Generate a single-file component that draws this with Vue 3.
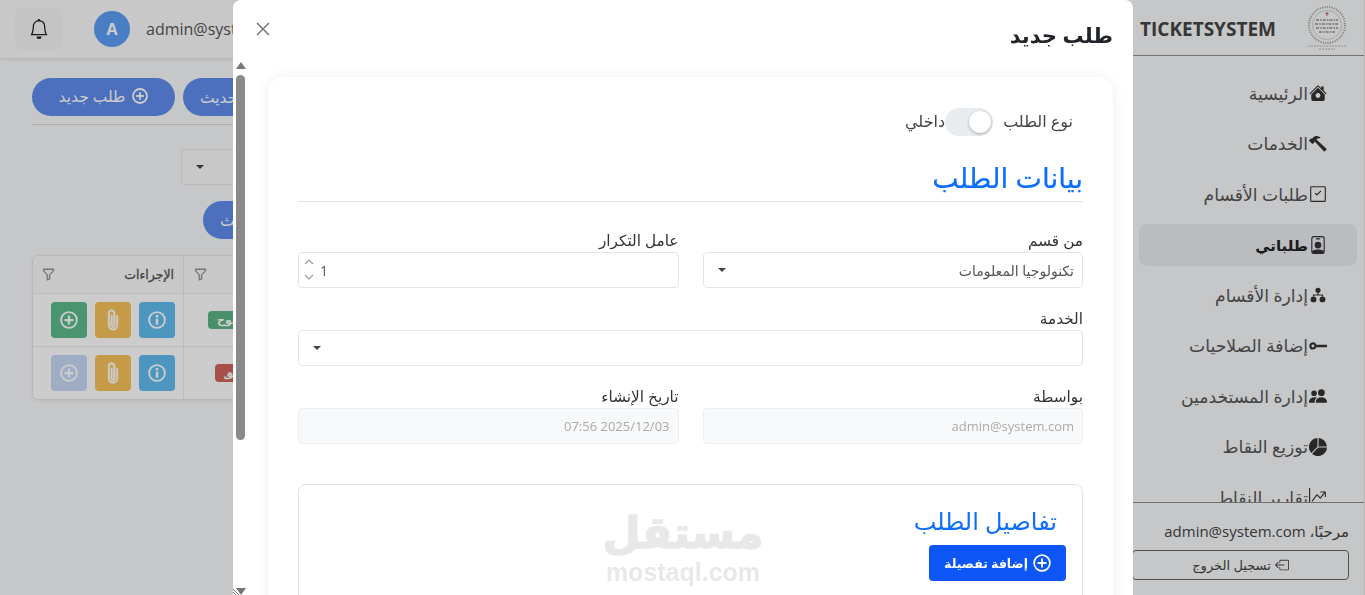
<script setup>
const clip = 'M4.5 3a2.5 2.5 0 0 1 5 0v9a1.5 1.5 0 0 1-3 0V5a.5.5 0 0 1 1 0v7a.5.5 0 0 0 1 0V3a1.5 1.5 0 1 0-3 0v9a2.5 2.5 0 0 0 5 0V5a.5.5 0 0 1 1 0v7a3.5 3.5 0 1 1-7 0z'
const funnel = 'M1.5 1.5A.5.5 0 0 1 2 1h12a.5.5 0 0 1 .5.5v2a.5.5 0 0 1-.128.334L10 8.692V13.5a.5.5 0 0 1-.342.474l-3 1A.5.5 0 0 1 6 14.5V8.692L1.628 3.834A.5.5 0 0 1 1.5 3.5zm1 .5v1.308l4.372 4.858A.5.5 0 0 1 7 8.5v5.306l2-.666V8.5a.5.5 0 0 1 .128-.334L13.5 3.308V2z'
const bell = 'M8 16a2 2 0 0 0 2-2H6a2 2 0 0 0 2 2M8 1.918l-.797.161A4 4 0 0 0 4 6c0 .628-.134 2.197-.459 3.742-.16.767-.376 1.566-.663 2.258h10.244c-.287-.692-.502-1.49-.663-2.258C12.134 8.197 12 6.628 12 6a4 4 0 0 0-3.203-3.92zM14.22 12c.223.447.481.801.78 1H1c.299-.199.557-.553.78-1C2.68 10.2 3 6.88 3 6c0-2.42 1.72-4.44 4.005-4.901a1 1 0 1 1 1.99 0A5 5 0 0 1 13 6c0 .88.32 4.2 1.22 6'
const logout = 'M6 12.5a.5.5 0 0 0 .5.5h8a.5.5 0 0 0 .5-.5v-9a.5.5 0 0 0-.5-.5h-8a.5.5 0 0 0-.5.5v2a.5.5 0 0 1-1 0v-2A1.5 1.5 0 0 1 6.5 2h8A1.5 1.5 0 0 1 16 3.5v9a1.5 1.5 0 0 1-1.5 1.5h-8A1.5 1.5 0 0 1 5 12.5v-2a.5.5 0 0 1 1 0zM.146 8.354a.5.5 0 0 1 0-.708l3-3a.5.5 0 1 1 .708.708L1.707 7.5H10.5a.5.5 0 0 1 0 1H1.707l2.147 2.146a.5.5 0 0 1-.708.708z'

const navItems = [
  { label: 'الرئيسية', d: 'M7.293 1.5a1 1 0 0 1 1.414 0L11 3.793V2.5a.5.5 0 0 1 .5-.5h1a.5.5 0 0 1 .5.5v3.293l2.354 2.353a.5.5 0 0 1-.708.708L8 2.207 1.354 8.854a.5.5 0 1 1-.708-.708zM14 9.293l-6-6-6 6V13.5A1.5 1.5 0 0 0 3.5 15h9a1.5 1.5 0 0 0 1.5-1.5zM8 8a2.2 2.2 0 1 0 0 4.400a2.2 2.2 0 0 0 0-4.400' },
  { label: 'الخدمات', d: 'M9.972 2.508a.5.5 0 0 0-.16-.556l-.178-.129a5 5 0 0 0-2.076-.783C6.215.862 4.504 1.229 2.84 3.133H1.786a.5.5 0 0 0-.354.147L.146 4.567a.5.5 0 0 0 0 .706l2.571 2.579a.5.5 0 0 0 .708 0l1.286-1.29a.5.5 0 0 0 .146-.353V5.57l8.387 8.873A.5.5 0 0 0 14 14.5l1.5-1.5a.5.5 0 0 0 .017-.689l-9.129-8.63c.747-.456 1.772-.839 3.112-.839a.5.5 0 0 0 .472-.334' },
  { label: 'طلبات الأقسام', d: 'M2 1h12a1 1 0 0 1 1 1v12a1 1 0 0 1-1 1H2a1 1 0 0 1-1-1V2a1 1 0 0 1 1-1zm0 1v12h12V2zM11 5.500l-4 4-2-2 .7-.7L7 8.100l3.300-3.300z' },
  { label: 'طلباتي', active: true, d: 'M6.500 2a.5.5 0 0 0 0 1h3a.5.5 0 0 0 0-1zM11 8a3 3 0 1 1-6 0 3 3 0 0 1 6 0M4.500 0A2.500 2.500 0 0 0 2 2.500V14a2 2 0 0 0 2 2h8a2 2 0 0 0 2-2V2.500A2.500 2.500 0 0 0 11.500 0zM3 2.500A1.500 1.500 0 0 1 4.500 1h7A1.500 1.500 0 0 1 13 2.500v10.795a4.200 4.200 0 0 0-.776-.492C11.392 12.387 10.063 12 8 12s-3.392.387-4.224.803a4.200 4.200 0 0 0-.776.492z' },
  { label: 'إدارة الأقسام', d: 'M8 1.500a2.300 2.300 0 1 1 0 4.600a2.300 2.300 0 0 1 0-4.600zM7.500 6h1v1.500H12.500V9h-1V8.500h-7V9h-1V7.500H7.500zM4 9.300a2.600 2.600 0 1 1 0 5.200a2.600 2.600 0 0 1 0-5.200zM12 9.300a2.600 2.600 0 1 1 0 5.200a2.600 2.600 0 0 1 0-5.200z' },
  { label: 'إضافة الصلاحيات', d: 'M3.500 11.200a3.200 3.200 0 1 1 3-4.300H16v2.200H6.500a3.200 3.200 0 0 1-3 2.100zM3.500 9.300a1.300 1.300 0 1 0 0-2.600a1.300 1.300 0 0 0 0 2.600z' },
  { label: 'إدارة المستخدمين', d: 'M7 14s-1 0-1-1 1-4 5-4 5 3 5 4-1 1-1 1zm4-6a3 3 0 1 0 0-6 3 3 0 0 0 0 6m-5.784 6A2.240 2.240 0 0 1 5 13c0-1.355.68-2.750 1.936-3.720A6.300 6.300 0 0 0 5 9c-4 0-5 3-5 4s1 1 1 1zM4.500 8a2.500 2.500 0 1 0 0-5 2.500 2.500 0 0 0 0 5' },
  { label: 'توزيع النقاط', d: 'M15.985 8.500H8.207l-5.500 5.500a8 8 0 0 0 13.277-5.500zM2 13.292A8 8 0 0 1 7.500.015v7.778zM8.500.015V7.500h7.485A8 8 0 0 0 8.500.015' },
  { label: 'تقارير النقاط', d: 'M0 0h1v15h15v1H0zm10 3.500a.5.5 0 0 1 .5-.5h4a.5.5 0 0 1 .5.5v4a.5.5 0 0 1-1 0V4.900l-3.613 4.417a.5.5 0 0 1-.74.037L7.060 6.767l-3.656 5.027a.5.5 0 0 1-.808-.588l4-5.500a.5.5 0 0 1 .758-.06l2.609 2.610L13.445 4H10.500a.5.5 0 0 1-.5-.5' }
]

const rows = [
  { status: 'مفتوح', tone: 'open', addOff: false },
  { status: 'مغلق', tone: 'closed', addOff: true }
]
</script>

<template>
  <div class="app">
    <aside class="sidebar">
      <div class="brand">
        <svg class="seal" viewBox="0 0 44 44" aria-hidden="true">
          <circle cx="22" cy="19" r="18" fill="none" stroke="#a8a8a8" stroke-width="2" stroke-dasharray="1.200 1.200" />
          <circle cx="22" cy="19" r="14.500" fill="none" stroke="#c0c0c0" stroke-width=".7" />
          <path d="M11 14h22M10 18h24M11 22h22M14 26h16" stroke="#8e8e8e" stroke-width="1.600" stroke-dasharray="3 1.200 1.500 1" fill="none" />
          <path d="M22 6v4M20.500 7.500h3" stroke="#b06a62" stroke-width="1" />
          <path d="M3 40h38M14 43h16" stroke="#b5b5b5" stroke-width="1" stroke-dasharray="2 1" />
        </svg>
        <span class="brand-name">TICKETSYSTEM</span>
      </div>
      <nav class="nav">
        <a v-for="item in navItems" :key="item.label" class="nav-item" :class="{ active: item.active }">
          <svg class="nav-icon" viewBox="0 0 16 16" aria-hidden="true"><path :d="item.d" fill="currentColor" fill-rule="evenodd" /></svg>
          <span>{{ item.label }}</span>
        </a>
      </nav>
      <div class="side-foot">
        <p class="welcome">مرحبًا، admin@system.com</p>
        <button class="logout">
          <svg class="logout-icon" viewBox="0 0 16 16" aria-hidden="true"><path :d="logout" fill="currentColor" /></svg>
          تسجيل الخروج
        </button>
      </div>
    </aside>

    <main class="main">
      <header class="topbar">
        <div class="user">
          <span class="user-mail">admin@system.com</span>
          <span class="avatar">A</span>
        </div>
        <button class="bell">
          <svg viewBox="0 0 16 16" width="20" height="20" aria-hidden="true"><path :d="bell" fill="#222" /></svg>
        </button>
      </header>

      <section class="content">
        <div class="toolbar">
          <button class="pill refresh">
            <svg class="plus-svg" viewBox="0 0 16 16" aria-hidden="true"><path d="M13 8a5 5 0 1 1-1.500-3.500M12 1.500v3.300H8.700" fill="none" stroke="currentColor" stroke-width="1.600" /></svg>
            تحديث
          </button>
          <button class="pill wide-pill">
            <svg class="plus-svg" viewBox="0 0 16 16" aria-hidden="true">
              <circle cx="8" cy="8" r="7" fill="none" stroke="currentColor" stroke-width="1.800" />
              <path d="M8 4.200v7.600M4.200 8h7.600" stroke="currentColor" stroke-width="1.800" />
            </svg>
            طلب جديد
          </button>
        </div>
        <div class="filter-select"><span class="caret"></span></div>
        <button class="pill search">
          <svg class="plus-svg" viewBox="0 0 16 16" aria-hidden="true"><circle cx="7" cy="7" r="5" fill="none" stroke="currentColor" stroke-width="1.600" /><path d="M11 11l4 4" stroke="currentColor" stroke-width="1.600" /></svg>
          بحث
        </button>

        <div class="table">
          <div class="tr head">
            <div class="td wide"></div>
            <div class="td status">
              <svg class="funnel" viewBox="0 0 16 16" aria-hidden="true"><path :d="funnel" fill="#888" stroke="#888" stroke-width=".5" /></svg>
            </div>
            <div class="td actions-head">
              <span>الإجراءات</span>
              <svg class="funnel" viewBox="0 0 16 16" aria-hidden="true"><path :d="funnel" fill="#888" stroke="#888" stroke-width=".5" /></svg>
            </div>
          </div>
          <div v-for="row in rows" :key="row.status" class="tr body-row">
            <div class="td wide"></div>
            <div class="td status"><span class="badge" :class="row.tone">{{ row.status }}</span></div>
            <div class="td actions">
              <button class="act info">
                <svg viewBox="0 0 16 16" aria-hidden="true">
                  <circle cx="8" cy="8" r="7" fill="none" stroke="#fff" stroke-width="1.700" />
                  <circle cx="8" cy="4.600" r="1.200" fill="#fff" />
                  <rect x="6.900" y="6.800" width="2.200" height="5.400" fill="#fff" />
                </svg>
              </button>
              <button class="act clip"><svg class="clip-svg" viewBox="0 0 16 16" aria-hidden="true"><path :d="clip" fill="#fff" stroke="#fff" stroke-width=".5" /></svg></button>
              <button class="act add" :class="{ off: row.addOff }">
                <svg viewBox="0 0 16 16" aria-hidden="true">
                  <circle cx="8" cy="8" r="7" fill="none" stroke="#fff" stroke-width="1.700" />
                  <path d="M8 4v8M4 8h8" stroke="#fff" stroke-width="2" />
                </svg>
              </button>
            </div>
          </div>
        </div>
      </section>
    </main>

    <div class="backdrop"></div>

    <div class="modal">
      <div class="modal-head">
        <h3 class="modal-title">طلب جديد</h3>
        <svg class="close" viewBox="0 0 16 16" aria-hidden="true"><path d="M2 2l12 12M14 2L2 14" stroke="#777" stroke-width="1.500" fill="none" /></svg>
      </div>

      <div class="modal-body">
        <div class="card">
          <div class="type-row">
            <span class="type-text">نوع الطلب</span>
            <span class="switch"><span class="knob"></span></span>
            <span class="type-text type-value">داخلي</span>
          </div>

          <h2 class="section-title">بيانات الطلب</h2>

          <div class="grid">
            <div class="field">
              <label>من قسم</label>
              <div class="control select"><span>تكنولوجيا المعلومات</span><span class="caret"></span></div>
            </div>
            <div class="field">
              <label>عامل التكرار</label>
              <div class="control number">
                <span>1</span>
                <svg class="spin" viewBox="0 0 12 24" aria-hidden="true"><path d="M2 6l4-4 4 4M2 17l4 4 4-4" stroke="#9a9a9a" stroke-width="1.100" fill="none" /></svg>
              </div>
            </div>
            <div class="field full">
              <label>الخدمة</label>
              <div class="control select"><span></span><span class="caret"></span></div>
            </div>
            <div class="field">
              <label>بواسطة</label>
              <div class="control disabled">admin@system.com</div>
            </div>
            <div class="field">
              <label>تاريخ الإنشاء</label>
              <div class="control disabled">2025/12/03 07:56</div>
            </div>
          </div>

          <div class="details">
            <h4 class="details-title">تفاصيل الطلب</h4>
            <button class="add-detail">
              <svg viewBox="0 0 16 16" width="18" height="18" aria-hidden="true">
                <circle cx="8" cy="8" r="7" fill="none" stroke="#fff" stroke-width="1.500" />
                <path d="M8 4v8M4 8h8" stroke="#fff" stroke-width="1.600" />
              </svg>
              إضافة تفصيلة
            </button>
            <div class="watermark">
              <span class="wm-ar">مستقل</span>
              <span class="wm-en">mostaql.com</span>
            </div>
          </div>
        </div>
      </div>

      <div class="scrollbar">
        <span class="arrow up"></span>
        <span class="thumb"></span>
        <span class="arrow down"></span>
      </div>
      <svg class="grip" viewBox="0 0 8 6" aria-hidden="true"><path d="M0 0l6 6M0 3l3 3" stroke="#777" stroke-width="1" fill="none" /></svg>
    </div>
  </div>
</template>

<style>
html, body { margin: 0; height: 100%; overflow: hidden; }
</style>

<style scoped>
* { box-sizing: border-box; }
.app {
  position: relative;
  display: flex;
  direction: rtl;
  width: 100%;
  height: 595px;
  overflow: hidden;
  background: #f8f9fa;
  color: #333;
  font-family: "Open Sans", "DejaVu Sans", sans-serif;
}
button { font-family: inherit; border: 0; }

.sidebar {
  flex: 0 0 240px;
  display: flex;
  flex-direction: column;
  background: #f8f9fa;
  border-right: 1px solid #e6e6e6;
}
.brand {
  flex: 0 0 56px;
  display: flex;
  align-items: center;
  gap: 29px;
  padding-right: 15px;
  border-bottom: 1px solid #8f8f8f;
}
.seal { width: 44px; height: 44px; }
.brand-name { direction: ltr; margin-top: 2px; font-weight: 700; font-size: 19px; color: #444; }
.nav { flex: 1; min-height: 0; overflow: hidden; padding: 16px 7px 0 14px; }
.nav-item {
  display: flex;
  align-items: center;
  gap: 1px;
  height: 42px;
  margin-bottom: 8.500px;
  padding-right: 30px;
  border-radius: 8px;
  font-size: 17.200px;
  color: #555;
}
.nav-item.active { background: #e9ecef; font-weight: 700; font-size: 15px; color: #222; }
.nav-icon { width: 18px; height: 18px; flex: none; color: #333; }
.side-foot {
  flex: 0 0 93px;
  padding: 0 15px 0 0;
  border-top: 1px solid #8f8f8f;
}
.welcome { margin: 17px 0 8px; font-size: 15px; color: #444; line-height: 22px; }
.logout {
  display: flex;
  align-items: center;
  justify-content: center;
  gap: 4px;
  width: 217px;
  height: 30px;
  background: transparent;
  border: 1px solid #666;
  border-radius: 4px;
  font-size: 13px;
  color: #444;
}
.logout-icon { width: 14px; height: 14px; }

.main { flex: 1; min-width: 0; display: flex; flex-direction: column; }
.topbar {
  flex: 0 0 58px;
  display: flex;
  align-items: center;
  justify-content: flex-start;
  padding: 0 15px;
  background: #fbfbfb;
  box-shadow: 0 1px 4px rgba(0,0,0,.12);
}
.user { display: flex; align-items: center; gap: 16px; padding-left: 32px; margin-right: auto; }
.bell {
  width: 47px;
  height: 42px;
  display: flex;
  align-items: center;
  justify-content: center;
  background: #f6f6f6;
  border-radius: 6px;
}
.user-mail { direction: ltr; font-size: 16px; color: #555; }
.avatar {
  width: 36px;
  height: 36px;
  border-radius: 50%;
  background: #5c9ef5;
  color: #fff;
  font-weight: 700;
  font-size: 16px;
  display: flex;
  align-items: center;
  justify-content: center;
}

.content { padding: 20px 32px 0; }
.toolbar {
  display: flex;
  justify-content: flex-end;
  gap: 8px;
  padding-bottom: 8px;
  border-bottom: 1px solid #ddd;
}
.pill {
  height: 38px;
  padding: 0 17px;
  border-radius: 19px;
  background: #5f8bee;
  color: #fff;
  font-size: 15.500px;
  display: inline-flex;
  align-items: center;
  justify-content: center;
  gap: 7px;
}
.wide-pill { width: 143px; padding-bottom: 2px; }
.plus-svg { width: 16px; height: 16px; flex: none; }
.filter-select {
  width: 300px;
  height: 36px;
  margin: 24px auto 0 149px;
  background: #fbfbfb;
  border: 1px solid #e9e9e9;
  border-radius: 4px;
  display: flex;
  align-items: center;
  justify-content: flex-end;
  padding-left: 14px;
}
.search { display: flex; width: fit-content; margin: 16px auto 0 171px; }
.table {
  margin: 16px 0 0;
  width: 100%;
  background: #fff;
  border: 1px solid #e6e6e6;
  border-radius: 6px;
  box-shadow: 0 1px 4px rgba(0,0,0,.06);
  overflow: hidden;
}
.tr { display: grid; grid-template-columns: 1fr 100px 150px; }
.head { height: 37px; background: #fafafa; font-size: 12.500px; color: #555; -webkit-text-stroke: .3px #555; }
.body-row { height: 53px; border-top: 1px solid #ececec; }
.td { display: flex; align-items: center; border-left: 1px solid #ececec; }
.td:last-child { border-left: 0; }
.status { padding: 0 23px 0 10px; justify-content: flex-start; }
.head .status { justify-content: flex-end; }
.actions-head { justify-content: space-between; padding: 0 9px; }
.funnel { width: 13px; height: 13px; }
.badge {
  display: inline-block;
  height: 18px;
  padding: 0 9px;
  border-radius: 4px;
  color: #fff;
  font-size: 11px;
  font-weight: 700;
  line-height: 18px;
  text-align: center;
}
.badge.open { background: #5cb585; }
.badge.closed { background: #d0655c; }
.actions { gap: 8px; padding-right: 8px; }
.act {
  width: 36px;
  height: 36px;
  border-radius: 4px;
  display: flex;
  align-items: center;
  justify-content: center;
  padding: 0;
}
.act svg { width: 18px; height: 18px; }
.act .clip-svg { width: 22px; height: 22px; }
.act.info { background: #5fbcf0; }
.act.clip { background: #f8c25a; }
.act.add { background: #5dbb8c; }
.act.add.off { background: #c6d8f5; }

.backdrop { position: fixed; inset: 0; background: rgba(0,0,0,.2); }

.modal {
  position: fixed;
  left: 233px;
  top: 0;
  width: 900px;
  height: 595px;
  background: #fff;
  border-radius: 8px 8px 0 0;
  overflow: hidden;
  display: flex;
  flex-direction: column;
}
.modal-head {
  flex: 0 0 62px;
  display: flex;
  align-items: center;
  justify-content: space-between;
  padding: 11px 20px 11px 22px;
}
.modal-title { margin: 8px 0 0; font-size: 21px; font-weight: 700; color: #212529; }
.close { width: 16px; height: 16px; margin-top: -5px; }
.modal-body { flex: 1; min-height: 0; overflow: hidden; padding: 15px 20px 0 35px; }
.card {
  height: 700px;
  padding: 31px 30px;
  border-radius: 16px;
  background: #fff;
  box-shadow: 0 0 14px rgba(0,0,0,.07);
}
.type-row {
  display: flex;
  align-items: center;
  gap: 10px;
  height: 28px;
  padding-right: 10px;
  font-size: 16px;
  color: #444;
}
.type-text { margin-top: -2px; }
.type-value { margin-right: -10px; }
.switch {
  position: relative;
  width: 48px;
  height: 28px;
  border-radius: 14px;
  background: #e9ecef;
}
.knob {
  position: absolute;
  top: 3px;
  right: 2px;
  width: 22px;
  height: 22px;
  border-radius: 50%;
  background: #fff;
  box-shadow: 0 1px 3px rgba(0,0,0,.3);
}
.section-title {
  margin: 24px 0 0;
  height: 42px;
  border-bottom: 1px solid #dee2e6;
  color: #0d6efd;
  font-size: 28px;
  font-weight: 400;
  line-height: 34px;
  -webkit-text-stroke: .2px #0d6efd;
}
.grid {
  display: grid;
  grid-template-columns: 1fr 1fr;
  column-gap: 24px;
  row-gap: 20px;
  margin-top: 28px;
}
.field.full { grid-column: 1 / -1; }
.field label { display: block; height: 22px; line-height: 20px; font-size: 15.300px; color: #333; }
.control {
  display: flex;
  align-items: center;
  justify-content: space-between;
  height: 36px;
  padding: 0 8px;
  background: #fff;
  border: 1px solid #e3e5e8;
  border-radius: 4px;
  font-size: 14px;
  color: #555;
}
.control.select { padding-left: 14px; }
.control.number { font-size: 14px; padding: 0 4px; justify-content: flex-end; gap: 5px; }
.spin { width: 12px; height: 24px; }
.control.disabled {
  background: #f8f9fa;
  border-color: #eceef0;
  color: #aaa;
  font-size: 13px;
  justify-content: flex-start;
}
.caret {
  width: 0;
  height: 0;
  border-left: 4.500px solid transparent;
  border-right: 4.500px solid transparent;
  border-top: 4.500px solid #444;
}
.details {
  position: relative;
  height: 240px;
  margin-top: 40px;
  padding: 20px 16px;
  border: 1px solid #dee2e6;
  border-radius: 8px;
}
.details-title { margin: -1px 9px 7px 0; font-size: 24px; font-weight: 400; line-height: 34px; color: #0d6efd; }
.add-detail {
  display: flex;
  align-items: center;
  justify-content: center;
  gap: 5px;
  width: 137px;
  height: 36px;
  background: #0d55f5;
  color: #fff;
  border-radius: 4px;
  font-size: 12.500px;
  font-weight: 700;
}
.watermark {
  position: absolute;
  left: 305px;
  top: 20px;
  width: 158px;
  display: flex;
  flex-direction: column;
  align-items: center;
  color: #e8e8e8;
  font-weight: 700;
  direction: ltr;
}
.wm-ar { font-size: 44px; line-height: 56px; direction: rtl; font-family: "DejaVu Sans", sans-serif; -webkit-text-stroke: 1.500px #e8e8e8; }
.wm-en { font-size: 25px; line-height: 22px; font-family: "Liberation Sans", sans-serif; }

.scrollbar {
  position: absolute;
  left: 2px;
  top: 60px;
  bottom: 0;
  width: 11px;
  display: flex;
  flex-direction: column;
  align-items: center;
}
.thumb { width: 9px; height: 365px; margin-top: 6px; background: #8a8a8a; border-radius: 5px; }
.arrow { width: 0; height: 0; border-left: 5px solid transparent; border-right: 5px solid transparent; }
.arrow.up { border-bottom: 7px solid #777; margin-top: 2px; }
.arrow.down { border-top: 7px solid #777; margin-top: auto; }
.grip { position: absolute; left: 0; bottom: 0; width: 8px; height: 6px; }
</style>
